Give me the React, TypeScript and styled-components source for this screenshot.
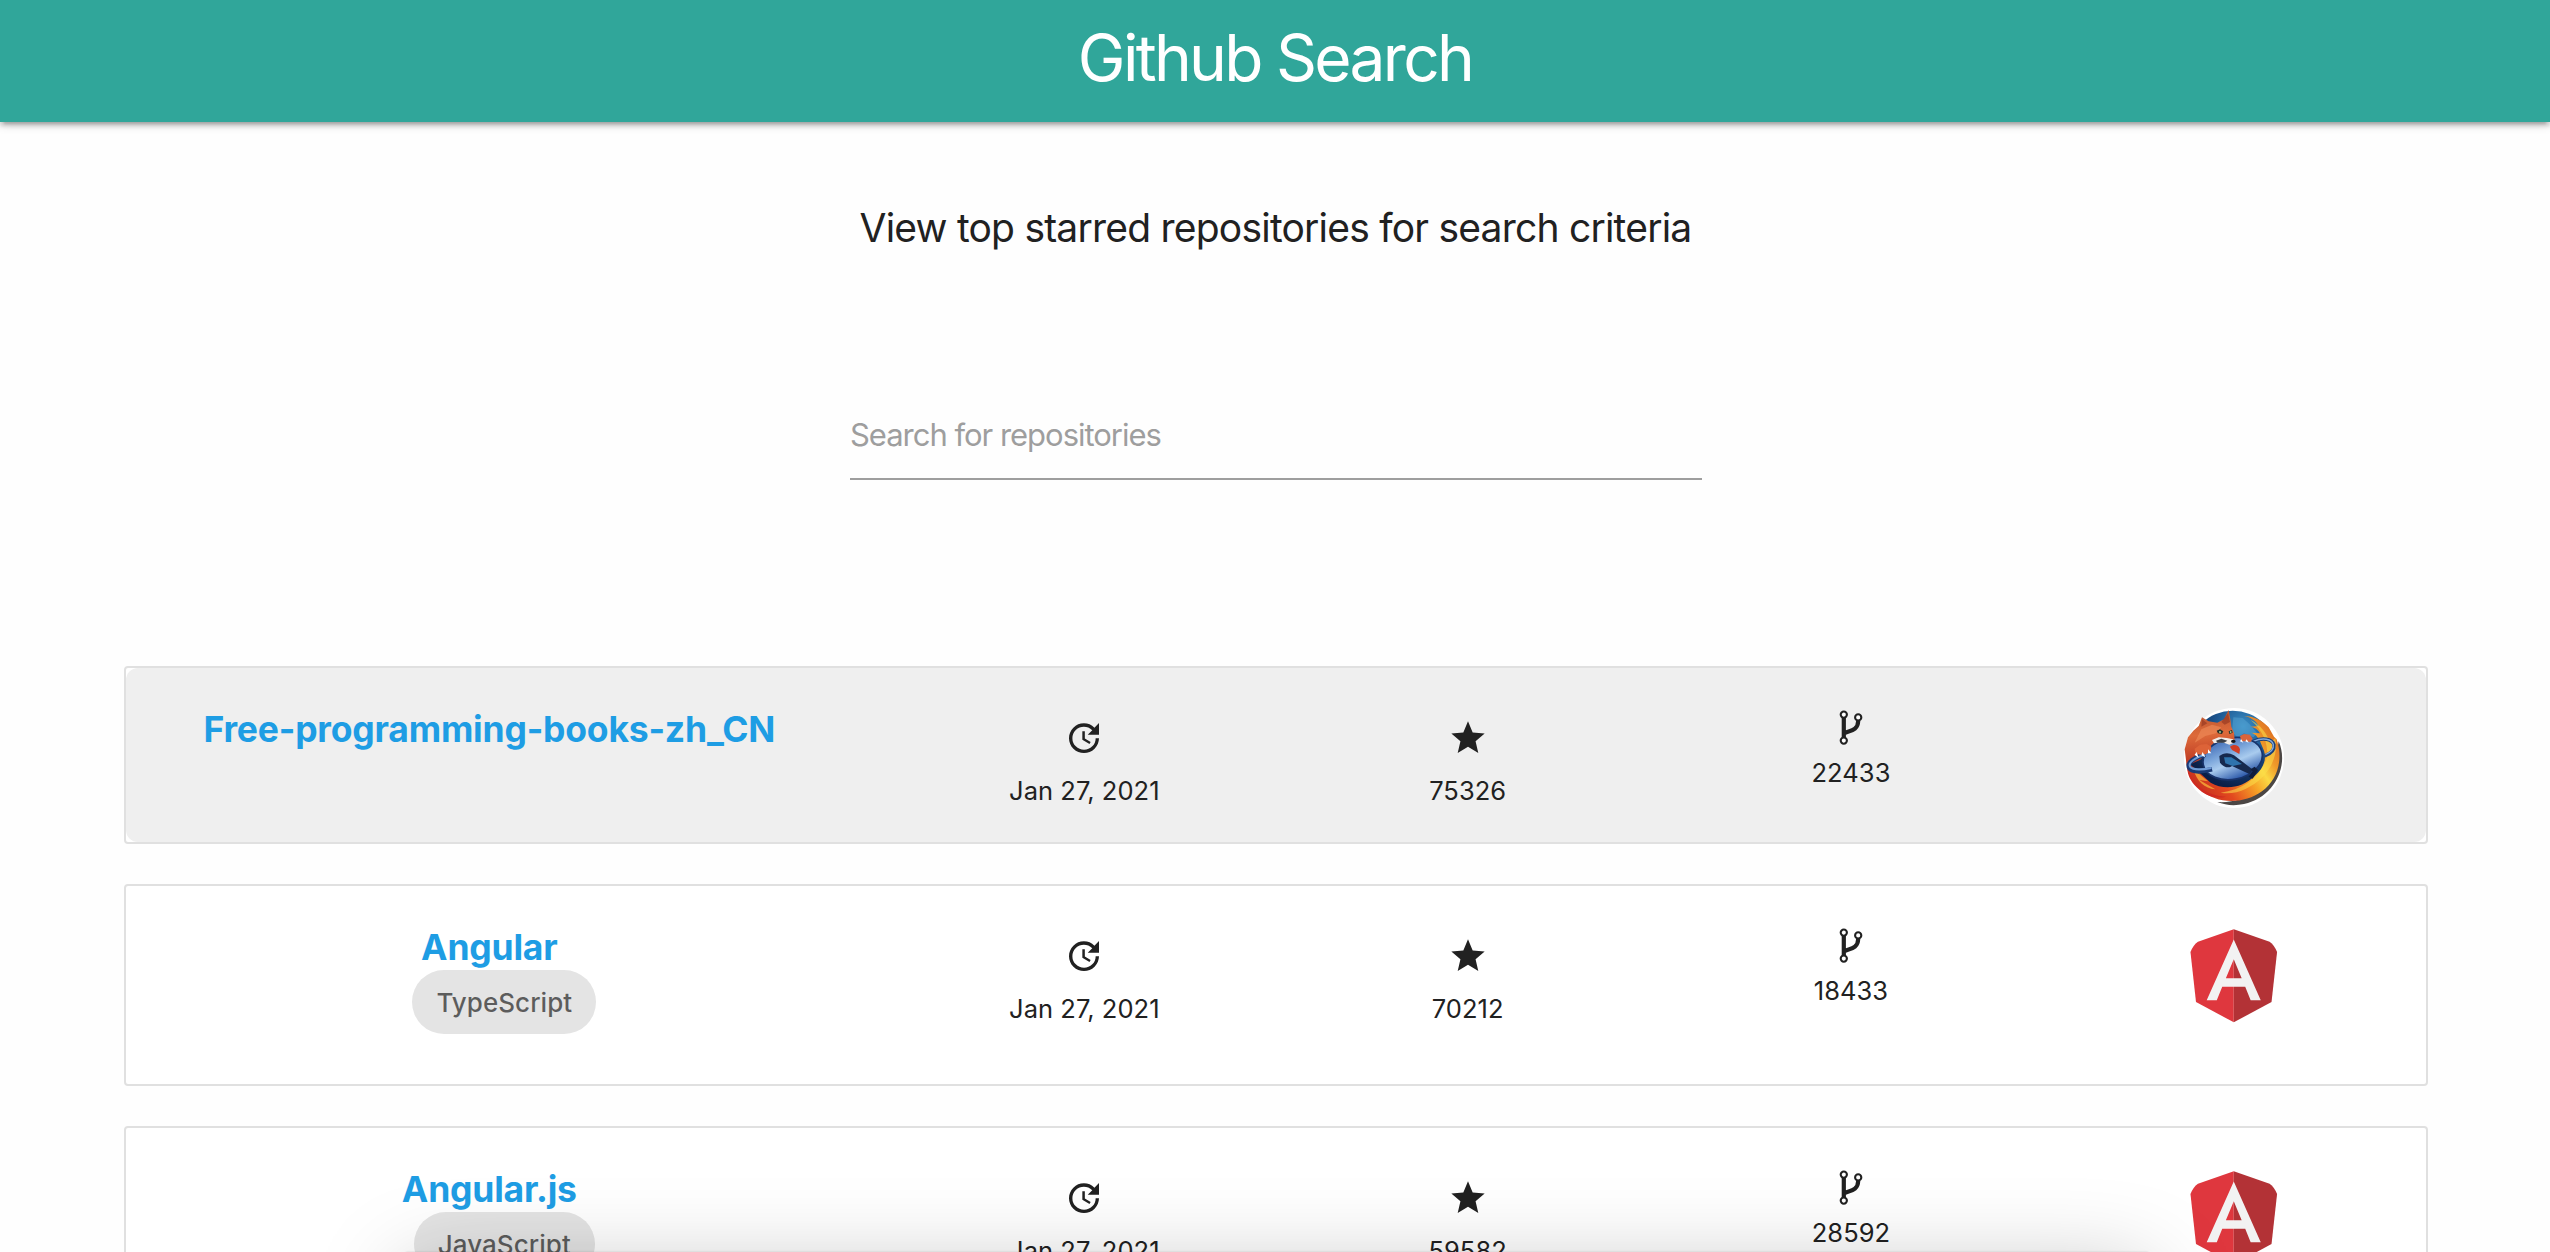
import React from 'react';
import styled, { createGlobalStyle } from 'styled-components';

const Global = createGlobalStyle`
  html, body { margin: 0; height: 1252px; overflow: hidden; background: #fefefe; }
  body { font-family: Inter, "Liberation Sans", sans-serif; color: #212121; }
  * { box-sizing: border-box; }
`;

const Page = styled.div`
  height: 1252px;
  overflow: hidden;
  position: relative;
`;

const NavBar = styled.nav`
  height: 122px;
  background: #30a69a;
  display: flex;
  justify-content: center;
  box-shadow: 0 4px 4px rgba(0, 0, 0, 0.14), 0 6px 2px -4px rgba(0, 0, 0, 0.12), 0 2px 10px rgba(0, 0, 0, 0.2);
`;

const Brand = styled.h1`
  margin: 0;
  color: #fff;
  font-size: 64px;
  font-weight: 420;
  line-height: 116px;
  letter-spacing: -2.7px;
`;

const Tagline = styled.h2`
  margin: 75px 0 0;
  padding-left: 1px;
  text-align: center;
  font-size: 39px;
  font-weight: 430;
  line-height: 62px;
  letter-spacing: -0.78px;
`;

const SearchField = styled.div`
  width: 852px;
  height: 92px;
  margin: 129px 0 0 850px;
  border-bottom: 2px solid #9e9e9e;
`;

const SearchInput = styled.input`
  width: 100%;
  height: 92px;
  padding: 0;
  border: 0;
  outline: 0;
  background: transparent;
  font: 430 31px Inter, sans-serif;
  letter-spacing: -1.02px;
  &::placeholder { color: #9e9e9e; opacity: 1; }
`;

const List = styled.ul`
  list-style: none;
  width: 2304px;
  margin: 186px 0 0 124px;
  padding: 0;
  display: flex;
  flex-direction: column;
  gap: 40px;
`;

const Card = styled.li<{ $tall: boolean }>`
  height: ${p => (p.$tall ? 202 : 178)}px;
  border: 2px solid #e0e0e0;
  border-radius: 4px;
  background: #fff;
`;

const CardBody = styled.div<{ $active?: boolean }>`
  height: 100%;
  display: grid;
  grid-template-columns: 2fr 1fr 1fr 1fr 1fr;
  border-radius: 12px;
  background: ${p => (p.$active ? '#efefef' : 'transparent')};
`;

const NameCell = styled.div`
  display: flex;
  flex-direction: column;
  align-items: center;
  padding-top: 39px;
`;

const RepoLink = styled.a`
  height: 45px;
  margin-right: 40px;
  color: #1e9de4;
  font-size: 35.5px;
  font-weight: 700;
  line-height: 45px;
  letter-spacing: -0.2px;
`;

const Chip = styled.span`
  height: 64px;
  margin-right: 10px;
  padding: 0 24px;
  border-radius: 32px;
  background: #e4e4e4;
  color: rgba(0, 0, 0, 0.6);
  font-size: 26px;
  font-weight: 500;
  line-height: 65px;
  letter-spacing: 0.05px;
`;

const Stat = styled.div<{ $top: number; $gap: number }>`
  display: flex;
  flex-direction: column;
  align-items: center;
  gap: ${p => p.$gap}px;
  padding-top: ${p => p.$top}px;
  font-size: 25.5px;
  font-weight: 430;
  line-height: 32px;
  letter-spacing: 0.05px;
  svg { display: block; fill: #212121; }
`;

const AvatarCell = styled.div`
  display: flex;
  justify-content: center;
  padding-top: 40px;
  svg { display: block; }
`;

const WindowShadow = styled.div`
  position: absolute;
  left: 406px;
  top: 1252px;
  width: 1742px;
  height: 200px;
  box-shadow: 0 20px 90px rgba(0, 0, 0, 0.26), 0 0 2px rgba(0, 0, 0, 0.15);
`;

const UpdateIcon = () => (
  <svg width="40" height="40" viewBox="0 0 24 24">
    <path d="M21 10.12h-6.78l2.74-2.82c-2.73-2.7-7.15-2.8-9.88-.1a6.875 6.875 0 0 0 0 9.79 7.02 7.02 0 0 0 9.88 0C18.32 15.65 19 14.08 19 12.1h2c0 1.98-.88 4.55-2.64 6.29-3.51 3.48-9.21 3.48-12.72 0-3.5-3.47-3.53-9.11-.02-12.58a8.987 8.987 0 0 1 12.65 0L21 3v7.12zM12.5 8v4.25l3.5 2.08-.72 1.21L11 13V8h1.5z" />
  </svg>
);

const StarIcon = () => (
  <svg width="40" height="40" viewBox="0 0 24 24">
    <path d="M12 17.27 18.18 21l-1.64-7.03L22 9.24l-7.19-.61L12 2 9.19 8.63 2 9.24l5.46 4.73L5.82 21z" />
  </svg>
);

const ForkIcon = () => (
  <svg width="24" height="36" viewBox="0 0 24 36">
    <g style={{ fill: 'none' }} stroke="#212121">
      <path d="M4.8 7.5v21M4.8 23.6C9 20.4 18.8 22 19.2 11" strokeWidth="4.2" />
      <circle cx="4.8" cy="4.6" r="3.1" strokeWidth="2.1" fill="#fff" />
      <circle cx="19.2" cy="7.4" r="3.1" strokeWidth="2.1" fill="#fff" />
      <circle cx="4.8" cy="30.6" r="3.1" strokeWidth="2.1" fill="#fff" />
    </g>
  </svg>
);

const AngularLogo = () => (
  <svg width="100" height="100" viewBox="18 23 215 215">
    <path fill="#df373e" d="M125 30 48 57Q38 64 31.9 79L43.8 186.6 125 230z" />
    <path fill="#b33236" d="M125 30 202 57Q212 64 218.1 79L206.2 186.6 125 230z" />
    <path fill="#f2f2f2" d="M125 52.1 66.8 182.6h21.7l11.7-29.2h49.4l11.7 29.2H183zm17 83.3h-34l17-40.9z" />
  </svg>
);

const FirefoxLogo = () => (
  <svg width="100" height="100" viewBox="0 0 150 150">
    <defs>
      <radialGradient id="globe" cx="62%" cy="18%" r="70%">
        <stop offset="0" stopColor="#3a8fc6" />
        <stop offset=".45" stopColor="#1c558f" />
        <stop offset="1" stopColor="#0b1f48" />
      </radialGradient>
      <linearGradient id="flame" gradientUnits="userSpaceOnUse" x1="20" y1="120" x2="140" y2="40">
        <stop offset="0" stopColor="#c8321f" />
        <stop offset=".25" stopColor="#e2481f" />
        <stop offset=".5" stopColor="#f6a026" />
        <stop offset=".66" stopColor="#fbd944" />
        <stop offset=".8" stopColor="#f09a2a" />
        <stop offset="1" stopColor="#dd6f22" />
      </linearGradient>
      <linearGradient id="letter" x1=".2" y1="0" x2=".5" y2="1">
        <stop offset="0" stopColor="#3c68b4" />
        <stop offset=".4" stopColor="#7ea8dc" />
        <stop offset=".62" stopColor="#a9cbee" />
        <stop offset="1" stopColor="#2f5cab" />
      </linearGradient>
      <linearGradient id="fur" x1=".3" y1="0" x2=".4" y2="1">
        <stop offset="0" stopColor="#b8532e" />
        <stop offset=".45" stopColor="#dd6a3a" />
        <stop offset="1" stopColor="#b9321f" />
      </linearGradient>
    </defs>
    <circle cx="75" cy="75" r="75" fill="#fff" />
    <path d="M142 50c16 36-6 84-52 94-14 3-28 2-40-3 46 3 82-28 88-68z" fill="#4c4745" />
    <circle cx="73" cy="70" r="66" fill="url(#globe)" />
    <path d="M74 14l14 1 10 9 12 14-6 6-14-6-10 6-8-8z" fill="#5aa9d8" opacity=".45" />
    <path d="M90 12c14 0 27 6 37 17l8 14 4 4c10 30 2 60-22 78-28 20-68 20-93-3C12 112 4 99 4 80l18 16 18 16c20 12 48 8 66-10 14-12 18-26 14-38l-6-14c-4-8-8-12-14-13l14 1c-3-6-8-9-14-10l12-1c-4-8-12-13-22-15z" fill="url(#flame)" />
    <path d="M100 18c15 8 25 20 29 35l8-8c6 32-14 62-44 76-12 6-26 8-38 6 34-4 64-26 70-56 0-20-6-36-25-53z" fill="#fce04a" opacity=".55" />
    <path d="M5 90c8 26 30 42 58 43-14 4-32-1-44-14C10 110 5 100 5 90z" fill="#d02a20" />
    <path d="M14 92l22 18-13-2 24 14c-16-1-28-12-33-30z" fill="#f5a436" opacity=".85" />
    <path d="M104 50c14-6 28-4 31 5 1 8-6 14-14 17" fill="none" stroke="#1c3f78" strokeWidth="5" />
    <path d="M104 50c14-6 28-4 30 5 1 7-5 12-12 15" fill="none" stroke="#7fa9dc" strokeWidth="2" />
    <ellipse cx="73" cy="76" rx="45" ry="31" transform="rotate(-12 73 76)" fill="url(#letter)" stroke="#18336b" strokeWidth="2.5" />
    <path d="M53 72c6-5 14-6 22-1l29 22-6 6-26-12c-4 4-13 2-18-5z" fill="#16294e" />
    <path d="M60 74l11 0 16 10-14 3-11-4z" fill="#2f74ae" />
    <path d="M69 58c5-4 13-3 15 4l-1 7-11-6z" fill="#cf3d26" />
    <path d="M100 92l6-4 5 5-8 13-6-3 6-8z" fill="#101d3c" />
    <path d="M1 62L6 44 14 34 22 27 27 14 37 20 50 22 60 17 67 3 70 20 71 28 75 37 76 50 70 54 60 51 48 50 41 56 36 66 24 78 10 84 4 86z" fill="url(#fur)" />
    <path d="M66 8l3 13-8 4-5-4zM27 17l8 6-9 5z" fill="#8f3320" opacity=".6" />
    <path d="M26 32l16-7 14 4-8 9-16 4-16 10z" fill="#ee8a58" opacity=".65" />
    <path d="M32 70C15 74 4 82 8 90c4 6 18 6 34 2" fill="none" stroke="#1c3a74" strokeWidth="7" />
    <path d="M32 70C16 74 6 82 9 88c4 5 18 5 32 2" fill="none" stroke="#6e9bd6" strokeWidth="3" />
    <path d="M42 48l10-4 12 1 10 2 1 5-7 3-11-4-12 2z" fill="#f1ece8" />
    <path d="M48 49l8-3 9 3-5 3-10 0z" fill="#3b3f46" />
    <ellipse cx="74" cy="50" rx="3.500" ry="2.500" fill="#15171c" />
    <path d="M49 34l5-2 5 3-2 4-6-1zM67 35l5-2 1 4-5 2z" fill="#26312b" />
    <circle cx="54" cy="36" r="1.6" fill="#9bc08a" />
    <circle cx="70" cy="36" r="1.4" fill="#9bc08a" />
    <path d="M16 61l8-6 10-1 7 4-1 7-7 4-9 1-7-3z" fill="#dd6338" />
    <path d="M84 42l6-3 9 1 4 6-3 5-7-1-7 0z" fill="#d9643a" />
    <path d="M19 66l3 9-6-5zM28 66l4 8-6-3zM36 62l5 6-5 0zM86 47l3 5-5-2zM94 47l3 5-5-2z" fill="#fff" />
  </svg>
);

interface Repo {
  name: string;
  language?: string;
  updated: string;
  stars: number;
  forks: number;
  logo: 'firefox' | 'angular';
}

const repos: Repo[] = [
  { name: 'Free-programming-books-zh_CN', updated: 'Jan 27, 2021', stars: 75326, forks: 22433, logo: 'firefox' },
  { name: 'Angular', language: 'TypeScript', updated: 'Jan 27, 2021', stars: 70212, forks: 18433, logo: 'angular' },
  { name: 'Angular.js', language: 'JavaScript', updated: 'Jan 27, 2021', stars: 59582, forks: 28592, logo: 'angular' },
];

const RepoCard = ({ repo, active }: { repo: Repo; active: boolean }) => (
  <Card $tall={!!repo.language}>
    <CardBody $active={active}>
      <NameCell>
        <RepoLink>{repo.name}</RepoLink>
        {repo.language && <Chip>{repo.language}</Chip>}
      </NameCell>
      <Stat $top={50} $gap={17}>
        <UpdateIcon />
        <span>{repo.updated}</span>
      </Stat>
      <Stat $top={50} $gap={17}>
        <StarIcon />
        <span>{repo.stars}</span>
      </Stat>
      <Stat $top={42} $gap={11}>
        <ForkIcon />
        <span>{repo.forks}</span>
      </Stat>
      <AvatarCell>{repo.logo === 'firefox' ? <FirefoxLogo /> : <AngularLogo />}</AvatarCell>
    </CardBody>
  </Card>
);

export default function App() {
  return (
    <Page>
      <Global />
      <NavBar>
        <Brand>Github Search</Brand>
      </NavBar>
      <Tagline>View top starred repositories for search criteria</Tagline>
      <SearchField>
        <SearchInput placeholder="Search for repositories" />
      </SearchField>
      <List>
        {repos.map((repo, i) => (
          <RepoCard key={repo.name} repo={repo} active={i === 0} />
        ))}
      </List>
      <WindowShadow />
    </Page>
  );
}
